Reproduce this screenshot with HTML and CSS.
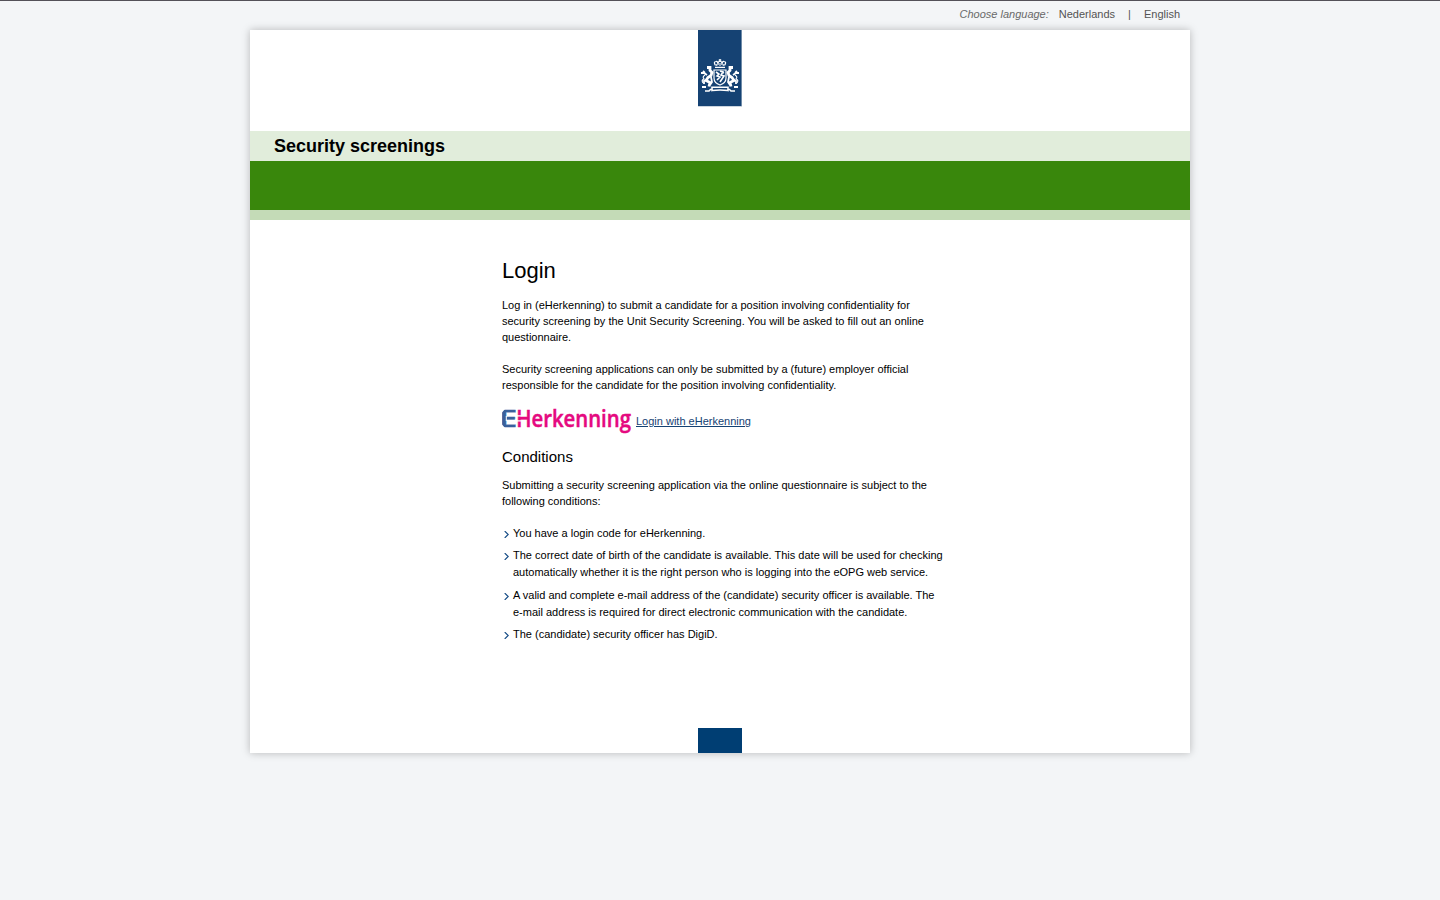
FILE: index.html
```html
<!DOCTYPE html>
<html lang="en">
<head>
<meta charset="utf-8">
<title>Security screenings</title>
<link rel="stylesheet" href="styles.css">
</head>
<body>
<nav class="languages"><em>Choose language:</em><a class="lang">Nederlands</a><span class="divider">|</span><a class="lang">English</a></nav>
<div class="page">
  <header class="brand">
    <svg class="ribbon" width="44" height="77" viewBox="0 0 44 77">
      <rect width="44" height="77" fill="#cbd5df"/>
      <rect width="43.5" height="76" fill="#154273"/>
      <g fill="none" stroke="#fff" stroke-width="1.2">
        <path d="M17 37.3h10M17.5 35.5Q15 31.5 18 31.5Q20 31 20 35Q20 31 22 31Q24 31 24 35Q24 31 26 31.5Q29 31.5 26.5 35.5M22 29v3M20.7 30h2.6"/>
        <path d="M18 34l1 2M26 34l-1 2M22 33v3" stroke-width="1"/>
        <path d="M16 40h12v8q0 5-6 7q-6-2-6-7z"/>
        <path d="M18 42l3 2-2 2 3 1-3 3M22 41l3 1-2 3 3 1-2 3-2 3M24 42l2 1" stroke-width="1.6"/>
        <g id="lion">
          <path d="M9 37.5h3v3l2 2-1 3-3 2-2 3 4 2-1 4" stroke-width="2.8"/>
          <path d="M3 43h3l3 2M5 41l2 2M9 50l-3 1v3M8 57H4M13 47l1 5-2 3" stroke-width="1.8"/>
          <path d="M7 45q-3 2-1 4q-3 1-1 4"/>
        </g>
        <use href="#lion" transform="matrix(-1 0 0 1 44 0)"/>
        <path d="M7 61h4l2-2M37 61h-4l-2-2M14 57.2h16v3.3q-8-1-16 0z" stroke-width="1.6"/>
      </g>
    </svg>
  </header>
  <div class="title">Security screenings</div>
  <div class="green-bar"></div>
  <div class="light-bar"></div>
  <main class="content">
    <h1>Login</h1>
    <p>Log in (eHerkenning) to submit a candidate for a position involving confidentiality for<br>security screening by the Unit Security Screening. You will be asked to fill out an online<br>questionnaire.</p>
    <p>Security screening applications can only be submitted by a (future) employer official<br>responsible for the candidate for the position involving confidentiality.</p>
    <div class="login">
      <svg class="eh-logo" width="130" height="26" viewBox="0 0 130 26">
        <g transform="translate(-3 18) scale(1.36 1)"><text class="eh-e">E</text></g>
        <path d="M-1 0h4L0 3.5v12l3 3.5h-4z" fill="#fff"/>
        <path d="M4.3 7v5" stroke="#fff"/>
        <g transform="translate(14.2 18) scale(.847 1)"><text class="eh-rest">Herkenning</text></g>
        <path d="M15 6.8h4.4M15 11.8h4.4" stroke="#fff" stroke-width="1.2"/>
      </svg>
      <a class="login-link">Login with eHerkenning</a>
    </div>
    <h2>Conditions</h2>
    <p>Submitting a security screening application via the online questionnaire is subject to the<br>following conditions:</p>
    <ul class="conditions">
      <li><svg class="arrow" viewBox="0 0 5 7"><path d="M.7 0L4.2 3.5L.7 7"/></svg><span>You have a login code for eHerkenning.</span></li>
      <li><svg class="arrow" viewBox="0 0 5 7"><path d="M.7 0L4.2 3.5L.7 7"/></svg><span>The correct date of birth of the candidate is available. This date will be used for checking<br>automatically whether it is the right person who is logging into the eOPG web service.</span></li>
      <li><svg class="arrow" viewBox="0 0 5 7"><path d="M.7 0L4.2 3.5L.7 7"/></svg><span>A valid and complete e-mail address of the (candidate) security officer is available. The<br>e-mail address is required for direct electronic communication with the candidate.</span></li>
      <li><svg class="arrow" viewBox="0 0 5 7"><path d="M.7 0L4.2 3.5L.7 7"/></svg><span>The (candidate) security officer has DigiD.</span></li>
    </ul>
  </main>
  <div class="footer-block"></div>
</div>
</body>
</html>
```

FILE: styles.css
```css
* { box-sizing: border-box; }
body {
  margin: 0;
  min-height: 900px;
  background: #f3f5f7;
  border-top: 1px solid #535158;
  font: 11px/16px "Liberation Sans", Arial, sans-serif;
  color: #000;
}
.languages {
  display: flex;
  justify-content: flex-end;
  width: 940px;
  height: 29px;
  margin: 0 auto;
  padding: 5px 10px 0 0;
  color: #535353;
}
.languages em { color: #696969; margin-right: 10px; }
.divider { margin: 0 13px; }
.page {
  display: flex;
  flex-direction: column;
  width: 940px;
  height: 723px;
  margin: 0 auto;
  background: #fff;
  box-shadow: 0 0 8px rgba(0, 0, 0, .25);
}
.brand { height: 101px; display: flex; justify-content: center; }
.ribbon { display: block; }
.title {
  height: 30px;
  padding-left: 24px;
  background: #e1eddb;
  font-size: 18px;
  line-height: 30px;
  font-weight: bold;
}
.green-bar { height: 49px; background: #39870c; }
.light-bar { height: 10px; background: #c4dbb7; }
.content { width: 450px; margin-left: 252px; padding-top: 37px; white-space: nowrap; }
h1 { margin: 0 0 12px; font-size: 22px; line-height: 28px; font-weight: normal; }
p { margin: 0 0 16px; }
.login { display: flex; height: 26px; margin-bottom: 12px; }
.eh-logo { display: block; overflow: visible; margin-right: 4px; }
.eh-e, .eh-rest { font-family: "Open Sans", sans-serif; font-size: 24px; font-weight: 600; }
.eh-e { fill: #39609b; stroke: #39609b; stroke-width: .4; }
.eh-rest { fill: #e5097f; stroke: #e5097f; stroke-width: .5; }
.login-link { color: #154273; text-decoration: underline; padding-top: 4px; }
h2 { margin: 0 0 10px; font-size: 15px; line-height: 20px; font-weight: normal; }
.conditions { margin: 0; padding: 0; list-style: none; line-height: 17px; }
.conditions li { display: flex; margin-bottom: 5.3px; }
.arrow { width: 5px; height: 7px; margin: 6px 4px 0 2px; fill: none; stroke: #154b86; stroke-width: 1.1; }
.footer-block { width: 44px; height: 25px; margin: auto auto 0; background: #003e73; }
```
